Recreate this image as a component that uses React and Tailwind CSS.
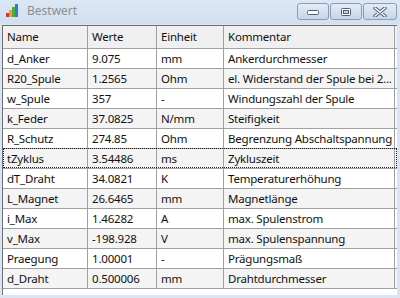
import React from "react";

const rows = [
  ["d_Anker", "9.075", "mm", "Ankerdurchmesser"],
  ["R20_Spule", "1.2565", "Ohm", "el. Widerstand der Spule bei 2..."],
  ["w_Spule", "357", "-", "Windungszahl der Spule"],
  ["k_Feder", "37.0825", "N/mm", "Steifigkeit"],
  ["R_Schutz", "274.85", "Ohm", "Begrenzung Abschaltspannung"],
  ["tZyklus", "3.54486", "ms", "Zykluszeit"],
  ["dT_Draht", "34.0821", "K", "Temperaturerhöhung"],
  ["L_Magnet", "26.6465", "mm", "Magnetlänge"],
  ["i_Max", "1.46282", "A", "max. Spulenstrom"],
  ["v_Max", "-198.928", "V", "max. Spulenspannung"],
  ["Praegung", "1.00001", "-", "Prägungsmaß"],
  ["d_Draht", "0.500006", "mm", "Drahtdurchmesser"],
];

const cols = "grid grid-cols-[85px_69px_67px_171px]";

// little bar chart app icon
const AppIcon = () => (
  <svg width="14" height="14" viewBox="0 0 14 14">
    <rect x="1" y="9" width="3" height="4" fill="#d9342b" />
    <rect x="4" y="6" width="3" height="7" fill="#f0a030" />
    <rect x="7" y="3" width="3" height="10" fill="#4caf3c" />
    <rect x="10" y="0" width="3" height="13" fill="#3a78c8" />
  </svg>
);

const CapButton = ({ children, wide }) => (
  <div
    className={`flex items-center justify-center h-[17px] ${
      wide ? "w-[34px]" : "w-[32px]"
    } rounded-[3px] border border-[#8d9bb5] bg-gradient-to-b from-[#e3ebf6] to-[#c8d5e8]`}
  >
    {children}
  </div>
);

const App = () => {
  return (
    <div className="w-[400px] h-[298px] bg-[#d9e5f4] flex flex-col font-['Noto_Sans',sans-serif] text-[11.5px] tracking-[-0.2px] text-[#111] overflow-hidden">
      {/* title bar */}
      <div className="h-[24px] flex items-start bg-gradient-to-b from-[#dce7f5] to-[#d3e0f1]">
        <div className="flex items-center gap-[8px] pl-[5px] pt-[4px]">
          <AppIcon />
          <span className="text-[#8e8e8e] text-[12px] tracking-normal leading-[14px]">Bestwert</span>
        </div>
        <div className="ml-auto flex gap-[1px] pt-[3px] pr-[3px]">
          <CapButton>
            <svg width="14" height="8" viewBox="0 0 14 8">
              <rect x="1.5" y="2.5" width="11" height="4" rx="1" fill="#fff" stroke="#4f5b6f" />
            </svg>
          </CapButton>
          <CapButton>
            <svg width="12" height="10" viewBox="0 0 12 10">
              <rect x="1.5" y="1.5" width="9" height="7" rx="1" fill="#fff" stroke="#4f5b6f" />
              <rect x="3.5" y="3.5" width="5" height="3" fill="#c8d5e8" stroke="#4f5b6f" />
            </svg>
          </CapButton>
          <CapButton wide>
            <svg width="14" height="10" viewBox="0 0 14 10">
              <path d="M2 1 L12 9 M12 1 L2 9" stroke="#4f5b6f" strokeWidth="3.4" strokeLinecap="round" />
              <path d="M2 1 L12 9 M12 1 L2 9" stroke="#fff" strokeWidth="1.6" strokeLinecap="round" />
            </svg>
          </CapButton>
        </div>
      </div>

      {/* list view */}
      <div className="ml-[2px] mt-[1px] w-[395px] h-[270px] bg-white border-l border-t border-[#6f6f6f]">
        <div className={`${cols} bg-[#f0f0f0] h-[23px] border-b border-[#a0a0a0]`}>
          {["Name", "Werte", "Einheit", "Kommentar"].map((h) => (
            <div key={h} className="border-r border-[#a0a0a0] px-[4px] flex items-center">
              {h}
            </div>
          ))}
        </div>
        {rows.map((r, i) => (
          <div
            key={r[0]}
            className={`${cols} h-[20px] relative ${
              i % 2 === 1 ? "bg-[#f4f4f4]" : "bg-white"
            } border-b border-[#a0a0a0]`}
          >
            {r.map((c, j) => (
              <div
                key={j}
                className="border-r border-[#a0a0a0] pl-[4px] flex items-center whitespace-nowrap overflow-hidden"
              >
                <span>{c}</span>
              </div>
            ))}
            {r[0] === "tZyklus" && (
              <div className="absolute inset-x-0 top-[-1px] bottom-0 border border-dotted border-[#222] pointer-events-none" />
            )}
          </div>
        ))}
      </div>
    </div>
  );
};

export default App;
